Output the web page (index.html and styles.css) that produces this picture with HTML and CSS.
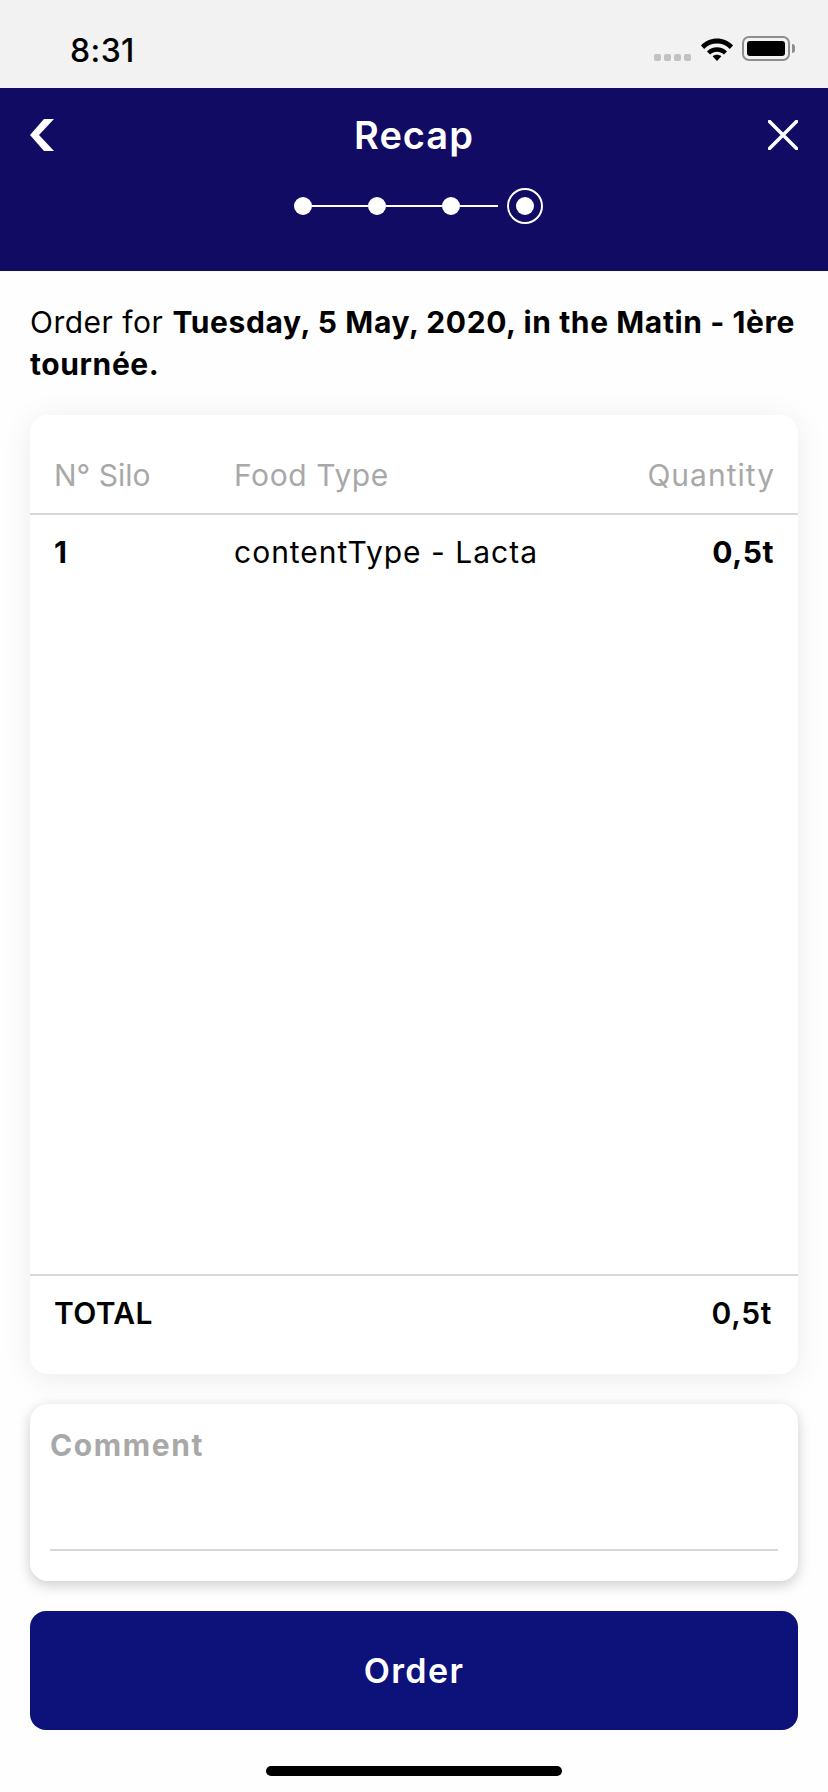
FILE: index.html

```html
<!DOCTYPE html>
<html>
<head>
    <meta charset="UTF-8">
    <title>Recap</title>
    <link rel="stylesheet" href="styles.css">
</head>
<body>
    <div class="page">
        <!-- iOS status bar -->
        <div class="status-bar">
            <span class="time">8:31</span>
            <div class="status-icons">
                <div class="signal"><i></i><i></i><i></i><i></i></div>
                <svg class="wifi" width="32" height="24" viewBox="0 0 32 24">
                    <path d="M0 8.5 C8.5 -0.8 23.5 -0.8 32 8.5 L28.8 12 C22 4.8 10 4.8 3.2 12 Z" fill="#000"/>
                    <path d="M6 14.5 C11.5 8.9 20.5 8.9 26 14.5 L22.9 17.6 C18.8 13.8 13.2 13.8 9.1 17.6 Z" fill="#000"/>
                    <path d="M11.6 19.2 C14 17.2 18 17.2 20.4 19.2 L16 24 Z" fill="#000"/>
                </svg>
                <div class="battery"><div class="battery-fill"></div></div>
                <div class="battery-tip"></div>
            </div>
        </div>

        <!-- header with steps -->
        <div class="header">
            <div class="title-row">
                <svg class="back" width="24" height="32" viewBox="0 0 24 32">
                    <polygon points="24,0 14,0 0,16 14,32 24,32 9,16" fill="#fff"/>
                </svg>
                <h1 class="title">Recap</h1>
                <svg class="close" width="30" height="30" viewBox="0 0 30 30">
                    <path d="M1.5 1.5 L28.5 28.5 M28.5 1.5 L1.5 28.5" fill="none" stroke="#fff" stroke-width="3.5" stroke-linecap="round"/>
                </svg>
            </div>
            <div class="steps">
                <span class="dot"></span>
                <span class="line"></span>
                <span class="dot"></span>
                <span class="line"></span>
                <span class="dot"></span>
                <span class="line line-last"></span>
                <span class="ring"><span class="dot"></span></span>
            </div>
        </div>

        <div class="content">
            <p class="summary"><span class="summary-lead">Order for</span> <b>Tuesday, 5 May, 2020, in the Matin - 1ère tournée.</b></p>

            <div class="card recap">
                <div class="row row-head">
                    <span class="silo">N° Silo</span>
                    <span>Food Type</span>
                    <span class="qty">Quantity</span>
                </div>
                <div class="rows">
                    <div class="row">
                        <b>1</b>
                        <span class="food">contentType - Lacta</span>
                        <b class="qty">0,5t</b>
                    </div>
                </div>
                <div class="total">
                    <span class="total-label">TOTAL</span>
                    <span class="total-value">0,5t</span>
                </div>
            </div>

            <div class="card comment">
                <div class="comment-field">Comment</div>
            </div>

            <button type="button" class="order">Order</button>
        </div>

        <div class="home-bar"></div>
    </div>
</body>
</html>
```

FILE: styles.css

```css
* {
    box-sizing: border-box;
}

body {
    margin: 0;
    background-color: #FEFEFE;
    color: #000000;
    font-family: Inter, "Noto Sans", sans-serif;
    font-size: 30px;
}

.page {
    display: flex;
    flex-direction: column;
    height: 1792px;
    overflow: hidden;
}

b {
    font-weight: 700;
}

/* status bar */
.status-bar {
    display: flex;
    justify-content: space-between;
    align-items: center;
    height: 88px;
    padding: 9px 33px 0 70px;
    background-color: #F2F2F2;
}

.time {
    margin-top: 4px;
    font-size: 32px;
    font-weight: 500;
    letter-spacing: 0.4px;
}

.status-icons {
    display: flex;
    align-items: center;
}

.signal {
    display: flex;
    gap: 3px;
    align-self: flex-end;
    margin: 0 10px 0 0;
}

.signal i {
    width: 7px;
    height: 7px;
    border-radius: 2px;
    background-color: #C2C2C2;
}

.wifi {
    margin-right: 9px;
}

.battery {
    width: 48px;
    height: 25px;
    padding: 3px;
    border: 2px solid #8E8E8E;
    border-radius: 7px;
}

.battery-fill {
    height: 100%;
    border-radius: 3px;
    background-color: #000000;
}

.battery-tip {
    width: 3px;
    height: 9px;
    margin-left: 2px;
    border-radius: 0 3px 3px 0;
    background-color: #8E8E8E;
}

/* header */
.header {
    height: 183px;
    padding: 31px 30px 0;
    background-color: #110B63;
    color: #FFFFFF;
}

.title-row {
    display: flex;
    justify-content: space-between;
    align-items: center;
    height: 32px;
}

.back {
    margin-right: 6px;
}

.title {
    margin: 0;
    font-size: 38px;
    font-weight: 600;
    letter-spacing: 1px;
}

.steps {
    display: flex;
    justify-content: center;
    align-items: center;
    margin-top: 37px;
    padding-left: 9px;
}

.dot {
    width: 18px;
    height: 18px;
    border-radius: 50%;
    background-color: #FFFFFF;
}

.line {
    width: 56px;
    height: 2px;
    background-color: #FFFFFF;
}

.line-last {
    width: 38px;
    margin-right: 9px;
}

.ring {
    display: flex;
    justify-content: center;
    align-items: center;
    width: 36px;
    height: 36px;
    border: 2px solid #FFFFFF;
    border-radius: 50%;
}

/* content */
.content {
    display: flex;
    flex-direction: column;
    padding: 0 30px;
}

.summary {
    height: 144px;
    margin: 0;
    padding-top: 30px;
    line-height: 42px;
    letter-spacing: 0.6px;
}

.summary-lead {
    letter-spacing: 0.5px;
}

.card {
    border-radius: 18px;
    background-color: #FFFFFF;
}

.recap {
    display: flex;
    flex-direction: column;
    height: 959px;
    box-shadow: 0 4px 30px rgba(0, 0, 0, 0.08);
}

.row {
    display: grid;
    grid-template-columns: 180px 1fr auto;
    align-items: center;
    padding: 0 24px;
    height: 73px;
    letter-spacing: 0.6px;
}

.row-head {
    height: 100px;
    padding-top: 22px;
    border-bottom: 2px solid #D8D8D8;
    color: #A8A8A8;
}

.row-head .qty {
    margin-right: -1px;
    letter-spacing: 1px;
}

.silo {
    letter-spacing: 0;
}

.food {
    letter-spacing: 1px;
}

.rows {
    flex: 1;
}

.total {
    display: flex;
    justify-content: space-between;
    height: 100px;
    padding: 19px 26px 0 24px;
    border-top: 2px solid #D8D8D8;
    font-weight: 600;
}

.total-label {
    letter-spacing: 0.4px;
}

.total-value {
    letter-spacing: 0.7px;
}

.comment {
    height: 177px;
    margin-top: 30px;
    padding: 23px 20px 0;
    box-shadow: 0 4px 14px rgba(0, 0, 0, 0.2);
}

.comment-field {
    height: 124px;
    border-bottom: 2px solid #D8D8D8;
    color: #A8A8A8;
    font-weight: 700;
    letter-spacing: 1.6px;
}

.order {
    height: 119px;
    margin-top: 30px;
    border: none;
    border-radius: 16px;
    background-color: #0D117A;
    color: #FFFFFF;
    font-family: inherit;
    font-size: 34px;
    font-weight: 600;
    letter-spacing: 1.4px;
}

.home-bar {
    width: 296px;
    height: 10px;
    margin: 36px auto 0;
    border-radius: 5px;
    background-color: #000000;
}
```
